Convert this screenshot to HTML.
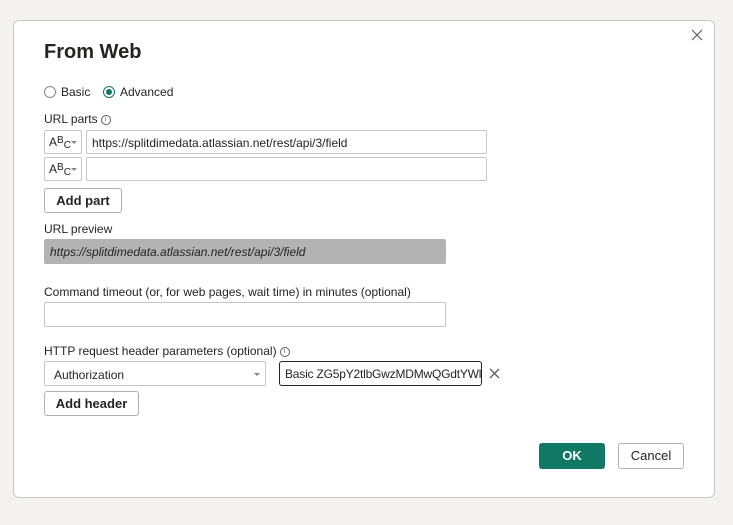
<!DOCTYPE html>
<html><head><meta charset="utf-8"><style>
*{box-sizing:border-box;margin:0;padding:0}
body{width:733px;height:525px;background:#f3f2f1;font-family:"Liberation Sans",sans-serif;font-size:12px;color:#252423;position:relative;overflow:hidden}
.dlg{position:absolute;left:13px;top:20px;width:702px;height:478px;background:#fff;border:1px solid #c8c6c4;border-radius:6px}
.a{position:absolute}
.box{position:absolute;border:1px solid #c8c6c4;border-radius:2px;background:#fff}
.btn{position:absolute;border:1px solid #b3b0ad;border-radius:3px;background:#fff;font-weight:bold;font-size:13px;text-align:center;color:#252423}
.abc{font-size:12px;padding-left:4px;line-height:22px}
.abc sup{font-size:10px;position:relative;top:-3px;vertical-align:baseline}
.abc sub{font-size:10px;position:relative;top:2px;vertical-align:baseline}
.caret{position:absolute;width:0;height:0;border-left:3px solid transparent;border-right:3px solid transparent;border-top:3px solid #8a8886}
.info{display:inline-block;width:10px;height:10px;border:1px solid #605e5c;border-radius:50%;font-size:7px;line-height:8px;text-align:center;vertical-align:middle;margin-left:3px;color:#605e5c}
</style></head><body>
<div class="dlg"></div>
<div class="a" style="left:44px;top:41px;font-size:20px;font-weight:600;color:#252423">From Web</div>
<svg class="a" style="left:690px;top:28px" width="14" height="14"><path d="M2 2L12 12M12 2L2 12" stroke="#605e5c" stroke-width="1.2"/></svg>

<div class="a" style="left:44px;top:86px;width:12px;height:12px;border:1px solid #8a8886;border-radius:50%"></div>
<div class="a" style="left:61px;top:85px">Basic</div>
<div class="a" style="left:103px;top:86px;width:12px;height:12px;border:1px solid #117865;border-radius:50%"><div style="position:absolute;left:2px;top:2px;width:6px;height:6px;background:#117865;border-radius:50%"></div></div>
<div class="a" style="left:120px;top:85px">Advanced</div>

<div class="a" style="left:44px;top:112px">URL parts<span class="info">i</span></div>
<div class="box abc" style="left:44px;top:130px;width:38px;height:24px">A<sup>B</sup><sub>C</sub><span class="caret" style="left:26px;top:10px"></span></div>
<div class="box" style="left:86px;top:130px;width:401px;height:24px;padding:5px 5px;font-size:12px">https://splitdimedata.atlassian.net/rest/api/3/field</div>
<div class="box abc" style="left:44px;top:157px;width:38px;height:24px">A<sup>B</sup><sub>C</sub><span class="caret" style="left:26px;top:10px"></span></div>
<div class="box" style="left:86px;top:157px;width:401px;height:24px"></div>
<div class="btn" style="left:44px;top:188px;width:78px;height:25px;line-height:23px">Add part</div>

<div class="a" style="left:44px;top:222px">URL preview</div>
<div class="a" style="left:44px;top:239px;width:402px;height:25px;background:#b3b3b3;border-radius:2px;font-style:italic;padding:6px 6px;font-size:12px">https://splitdimedata.atlassian.net/rest/api/3/field</div>

<div class="a" style="left:44px;top:285px">Command timeout (or, for web pages, wait time) in minutes (optional)</div>
<div class="box" style="left:44px;top:302px;width:402px;height:25px"></div>

<div class="a" style="left:44px;top:344px">HTTP request header parameters (optional)<span class="info">i</span></div>
<div class="box" style="left:44px;top:361px;width:222px;height:25px;padding:6px 9px">Authorization<span class="caret" style="left:209px;top:11px"></span></div>
<div class="a" style="left:279px;top:361px;width:203px;height:25px;border:1px solid #252423;border-radius:3px;padding:5px 5px;overflow:hidden;white-space:nowrap;font-size:12px;letter-spacing:-0.2px">Basic ZG5pY2tlbGwzMDMwQGdtYWls</div>
<svg class="a" style="left:488px;top:367px" width="13" height="13"><path d="M2 2L11 11M11 2L2 11" stroke="#605e5c" stroke-width="1.3"/></svg>
<div class="btn" style="left:44px;top:391px;width:95px;height:25px;line-height:23px">Add header</div>

<div class="a" style="left:539px;top:443px;width:66px;height:26px;background:#117865;border-radius:3px;color:#fff;font-weight:bold;font-size:13px;text-align:center;line-height:26px">OK</div>
<div class="btn" style="left:618px;top:443px;width:66px;height:26px;line-height:24px;font-weight:normal">Cancel</div>
</body></html>
